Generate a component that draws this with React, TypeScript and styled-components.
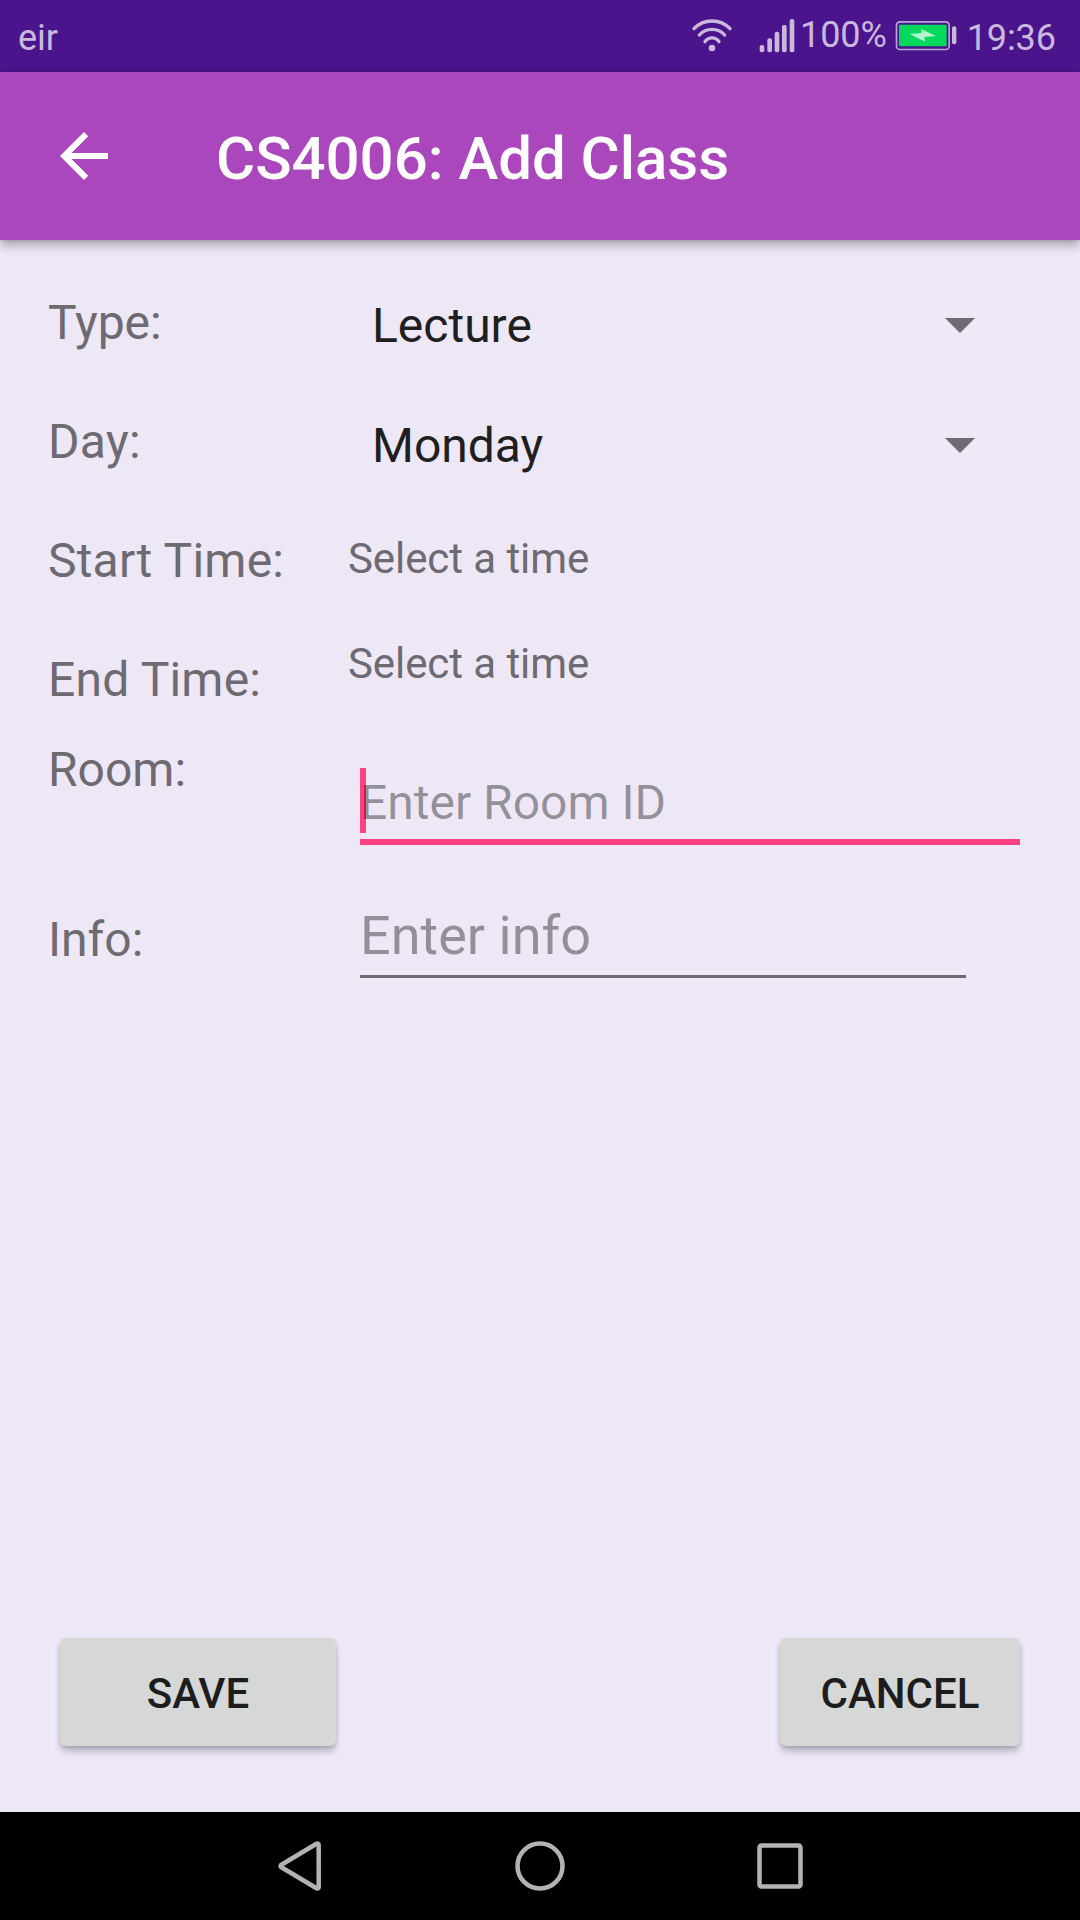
import React from "react";
import styled, { createGlobalStyle } from "styled-components";

const GlobalStyle = createGlobalStyle`
  *, *::before, *::after { box-sizing: border-box; }
  body { margin: 0; background: #ede7f6; font-family: Roboto, "Liberation Sans", sans-serif; }
  svg { display: block; flex: none; }
`;

const Screen = styled.div`
  width: 1080px;
  height: 1920px;
  display: flex;
  flex-direction: column;
  background: #ede7f6;
  overflow: hidden;
`;

const StatusBar = styled.header`
  height: 72px;
  flex: none;
  display: flex;
  align-items: flex-start;
  padding: 0 24px 0 18px;
  background: #4a148c;
  color: #c9b9dd;
`;

const StatusText = styled.span<{ $top: number; $left?: number }>`
  font-size: 36px;
  line-height: 42px;
  letter-spacing: -0.1px;
  white-space: nowrap;
  margin-top: ${(p) => p.$top}px;
  margin-left: ${(p) => p.$left ?? 0}px;
`;

const StatusIcons = styled.div`
  display: flex;
  align-items: flex-start;
  width: 366px;
  margin-left: auto;
`;

const IconSlot = styled.span<{ $top: number; $left?: number }>`
  flex: none;
  margin-top: ${(p) => p.$top}px;
  margin-left: ${(p) => p.$left ?? 0}px;
`;

const AppBar = styled.div`
  height: 168px;
  flex: none;
  display: flex;
  align-items: center;
  padding-left: 48px;
  background: #ab47bc;
  box-shadow: 0 5px 10px rgba(0, 0, 0, 0.3), 0 0 4px rgba(0, 0, 0, 0.14);
  color: #fff;
`;

const BackButton = styled.button`
  width: 72px;
  height: 72px;
  padding: 0;
  border: 0;
  background: none;
  color: inherit;
`;

const Title = styled.h1`
  margin: 6px 0 0 96px;
  font-size: 60px;
  line-height: 70px;
  font-weight: 500;
  letter-spacing: -0.03px;
  white-space: nowrap;
`;

const Form = styled.main`
  flex: 1;
  display: grid;
  grid-template-columns: 300px 1fr;
  align-items: start;
  padding: 0 60px 0 48px;
`;

const Labels = styled.div`
  display: flex;
  flex-direction: column;
  padding-top: 54px;
`;

const Label = styled.label<{ $gap?: number; $tracking?: number }>`
  font-size: 48px;
  line-height: 57px;
  letter-spacing: ${(p) => p.$tracking ?? 0}px;
  margin-top: ${(p) => p.$gap ?? 0}px;
  color: #6d6a71;
  white-space: nowrap;
`;

const Fields = styled.div`
  display: flex;
  flex-direction: column;
  padding-top: 27px;
`;

const Spinner = styled.div`
  height: 120px;
  display: flex;
  align-items: center;
  justify-content: space-between;
  padding: 0 45px 3px 24px;
  font-size: 48px;
  line-height: 57px;
  color: #1f1e20;
`;

const Caret = styled.span`
  border: 15px solid transparent;
  border-top-color: #6d6a71;
  border-bottom-width: 0;
`;

const TimePicker = styled.div<{ $gap: number }>`
  margin-top: ${(p) => p.$gap}px;
  font-size: 42px;
  line-height: 49px;
  letter-spacing: -0.08px;
  color: #6d6a71;
`;

const TextField = styled.div<{ $gap: number; $size: number; $focused?: boolean; $width: number; $pad: number }>`
  display: flex;
  align-items: center;
  margin: ${(p) => p.$gap}px 0 0 12px;
  width: ${(p) => p.$width}px;
  height: ${(p) => (p.$focused ? 77 : 75)}px;
  padding-bottom: ${(p) => p.$pad}px;
  border-bottom: ${(p) => (p.$focused ? "6px solid #ff4081" : "3px solid #6d6a71")};
  font-size: ${(p) => p.$size}px;
  line-height: 64px;
  color: rgba(0, 0, 0, 0.38);
`;

const Cursor = styled.span`
  width: 6px;
  height: 65px;
  margin-right: -6px;
  background: #ff4081;
`;

const Hint = styled.span<{ $drop: number }>`
  position: relative;
  padding-top: ${(p) => p.$drop}px;
`;

const Actions = styled.div`
  flex: none;
  display: flex;
  justify-content: space-between;
  padding: 0 60px 66px;
`;

const Button = styled.button<{ $width: number }>`
  width: ${(p) => p.$width}px;
  height: 108px;
  padding: 3px 0 0;
  border: 0;
  border-radius: 6px;
  background: #d6d7d7;
  box-shadow: 0 6px 7px -1px rgba(0, 0, 0, 0.24), 0 1px 4px rgba(0, 0, 0, 0.12);
  font: 500 42px/49px Roboto, "Liberation Sans", sans-serif;
  color: #1d1d1d;
`;

const NavBar = styled.nav`
  height: 108px;
  flex: none;
  display: flex;
  align-items: center;
  justify-content: center;
  gap: 180px;
  background: #000;
`;

const WifiIcon = () => (
  <svg width="44" height="38" viewBox="90 48 132 114" fill="none" stroke="#c9b9dd" strokeWidth="10" strokeLinecap="round">
    <path d="M102 86A75 75 0 0 1 210 86M118 105A51 51 0 0 1 194 105M135 125A25 25 0 0 1 177 125" />
    <circle cx="156" cy="144" r="10" fill="#c9b9dd" stroke="none" />
  </svg>
);

const bars = [
  { x: 299, y: 135 },
  { x: 322, y: 115 },
  { x: 344, y: 95 },
  { x: 366, y: 75 },
  { x: 389, y: 57 },
];

const SignalIcon = () => (
  <svg width="38" height="38" viewBox="294 48 114 114" fill="#c9b9dd">
    {bars.map((b) => (
      <rect key={b.x} x={b.x} y={b.y} width="14" height={157 - b.y} rx="6" />
    ))}
  </svg>
);

const BatteryIcon = () => (
  <svg width="65" height="35" viewBox="702 54 195 105">
    <rect x="709.5" y="65.5" width="158" height="83" rx="10" fill="none" stroke="#b8a3d3" strokeWidth="5" />
    <rect x="717" y="74" width="143" height="65" rx="3" fill="#00d95b" />
    <path d="M749 102L785 99L783 87L828 108L793 111L795 125Z" fill="#b3f4ce" />
    <rect x="876" y="79" width="13" height="54" rx="6" fill="#c9b9dd" />
  </svg>
);

export default function App() {
  return (
    <Screen>
      <GlobalStyle />
      <StatusBar>
        <StatusText $top={17}>eir</StatusText>
        <StatusIcons>
          <IconSlot $top={16}><WifiIcon /></IconSlot>
          <IconSlot $top={16} $left={24}><SignalIcon /></IconSlot>
          <StatusText $top={14} $left={4}>100%</StatusText>
          <IconSlot $top={18} $left={7}><BatteryIcon /></IconSlot>
          <StatusText $top={17} $left={8}>19:36</StatusText>
        </StatusIcons>
      </StatusBar>
      <AppBar>
        <BackButton aria-label="Back">
          <svg width="72" height="72" viewBox="0 0 24 24" fill="currentColor">
            <path d="M20 11H7.83l5.59-5.59L12 4l-8 8 8 8 1.41-1.41L7.83 13H20v-2z" />
          </svg>
        </BackButton>
        <Title>CS4006: Add Class</Title>
      </AppBar>
      <Form>
        <Labels>
          <Label>Type:</Label>
          <Label $gap={62} $tracking={0.35}>Day:</Label>
          <Label $gap={62} $tracking={0.2}>Start Time:</Label>
          <Label $gap={62} $tracking={0.2}>End Time:</Label>
          <Label $gap={33}>Room:</Label>
          <Label $gap={113}>Info:</Label>
        </Labels>
        <Fields>
          <Spinner>Lecture<Caret /></Spinner>
          <Spinner>Monday<Caret /></Spinner>
          <TimePicker $gap={27}>Select a time</TimePicker>
          <TimePicker $gap={56}>Select a time</TimePicker>
          <TextField $gap={80} $size={48} $width={660} $pad={6} $focused>
            <Cursor />
            <Hint $drop={4}>Enter Room ID</Hint>
          </TextField>
          <TextField $gap={58} $size={54} $width={606} $pad={8}>
            <Hint $drop={2}>Enter info</Hint>
          </TextField>
        </Fields>
      </Form>
      <Actions>
        <Button $width={276}>SAVE</Button>
        <Button $width={240}>CANCEL</Button>
      </Actions>
      <NavBar>
        <svg width="60" height="60" viewBox="0 0 60 60" fill="none" stroke="#b3b3b3" strokeWidth="4.5" strokeLinejoin="round">
          <path d="M11 29Q10 30 11 31L46.5 52.3Q48.7 53 48.7 51V9Q48.7 7 46.5 7.7Z" />
        </svg>
        <svg width="60" height="60" viewBox="0 0 60 60" fill="none" stroke="#b3b3b3" strokeWidth="4.5">
          <circle cx="30" cy="30" r="22.5" />
        </svg>
        <svg width="60" height="60" viewBox="0 0 60 60" fill="none" stroke="#b3b3b3" strokeWidth="4.5">
          <rect x="9.5" y="9.5" width="41" height="41" rx="2" />
        </svg>
      </NavBar>
    </Screen>
  );
}
